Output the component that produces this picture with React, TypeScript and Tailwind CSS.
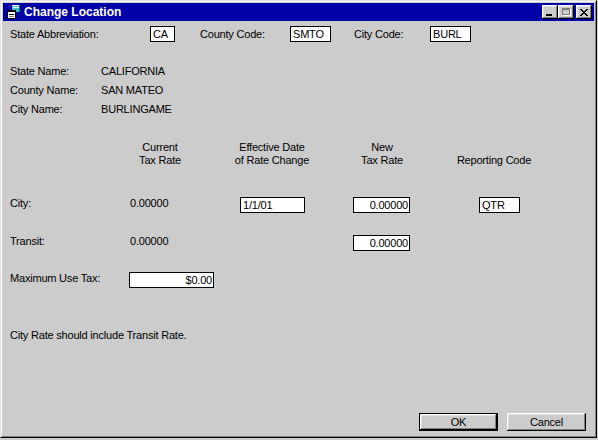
import React from 'react';

const bevel =
  'shadow-[inset_-1px_-1px_#000,inset_1px_1px_#fff,inset_-2px_-2px_#808080,inset_2px_2px_#e0e0e0]';

const Field: React.FC<{ value: string; width: string; right?: boolean }> = ({ value, width, right }) => (
  <div
    className={`${width} h-[16px] bg-white border border-black flex items-center leading-none ${
      right ? 'justify-end pr-[1px]' : 'pl-[2px]'
    }`}
  >
    {value}
  </div>
);

const TitleIcon = () => (
  <svg width="16" height="16" viewBox="0 0 16 16" shapeRendering="crispEdges">
    {/* back window */}
    <rect x="7" y="1" width="8" height="7" fill="#40c0c0" />
    <rect x="7" y="1" width="8" height="1" fill="#ffffff" />
    <rect x="8" y="3" width="6" height="1" fill="#ffffff" />
    <rect x="14" y="1" width="1" height="7" fill="#008080" />
    {/* front page */}
    <rect x="2" y="6" width="9" height="9" fill="#ffffff" />
    <rect x="2" y="6" width="9" height="2" fill="#000000" />
    <rect x="2" y="6" width="1" height="9" fill="#000000" />
    <rect x="10" y="6" width="1" height="9" fill="#000000" />
    <rect x="2" y="14" width="9" height="1" fill="#000000" />
    <rect x="4" y="10" width="5" height="1" fill="#000000" />
    <rect x="4" y="12" width="5" height="1" fill="#808080" />
  </svg>
);

const App: React.FC = () => {
  return (
    <div
      className="w-[598px] h-[440px] bg-[#cccccc] text-black text-[11px] tracking-[-0.2px]"
      style={{ fontFamily: '"Liberation Sans", Arial, sans-serif' }}
    >
      <div className="w-[597px] h-[438px] flex flex-col border border-t-[#e0e0e0] border-l-[#e0e0e0] border-r-black border-b-black">
        <div className="flex-1 flex flex-col p-[1px] border border-t-white border-l-white border-r-[#808080] border-b-[#808080]">
          {/* Title bar */}
          <div className="h-[18px] bg-[#0000a8] flex items-center pl-[2px] pr-[2px]">
            <TitleIcon />
            <span className="ml-[3px] text-white text-[12px] font-bold tracking-normal">Change Location</span>
            <div className="ml-auto flex items-center">
              <div className={`w-[16px] h-[14px] bg-[#cccccc] ${bevel} relative`}>
                <div className="absolute left-[4px] top-[9px] w-[6px] h-[2px] bg-black" />
              </div>
              <div className={`w-[16px] h-[14px] bg-[#cccccc] ${bevel} relative`}>
                <div className="absolute left-[4px] top-[3px] w-[8px] h-[7px] border border-[#808080] border-t-2 shadow-[1px_1px_#fff]" />
              </div>
              <div className={`ml-[2px] w-[16px] h-[14px] bg-[#cccccc] ${bevel} flex items-center justify-center`}>
                <svg width="8" height="7" viewBox="0 0 8 7" shapeRendering="crispEdges">
                  <path d="M0 0h2v1h1v1h2v-1h1v-1h2v1h-1v1h-1v1h-1v1h1v1h1v1h1v1h-2v-1h-1v-1h-2v1h-1v1h-2v-1h1v-1h1v-1h1v-1h-1v-1h-1v-1h-1z" fill="#000" />
                </svg>
              </div>
            </div>
          </div>

          {/* Content */}
          <div className="flex-1 flex flex-col pl-[7px] pr-[8px] pb-[4px]">
            <div className="mt-[5px] h-[16px] flex items-center">
              <div className="w-[140px]">State Abbreviation:</div>
              <Field value="CA" width="w-[25px]" />
              <div className="ml-[25px] w-[90px]">County Code:</div>
              <Field value="SMTO" width="w-[41px]" />
              <div className="ml-[23px] w-[76px]">City Code:</div>
              <Field value="BURL" width="w-[41px]" />
            </div>

            <div className="mt-[20px] flex flex-col">
              {[
                ['State Name:', 'CALIFORNIA'],
                ['County Name:', 'SAN MATEO'],
                ['City Name:', 'BURLINGAME'],
              ].map(([label, val]) => (
                <div key={label} className="h-[19px] flex items-center">
                  <div className="w-[91px]">{label}</div>
                  <div>{val}</div>
                </div>
              ))}
            </div>

            {/* Column headers */}
            <div className="mt-[22px] flex items-end leading-[13px] text-center">
              <div className="ml-[110px] w-[80px]">
                Current
                <br />
                Tax Rate
              </div>
              <div className="ml-[22px] w-[100px]">
                Effective Date
                <br />
                of Rate Change
              </div>
              <div className="ml-[30px] w-[60px]">
                New
                <br />
                Tax Rate
              </div>
              <div className="ml-[32px] w-[100px]">Reporting Code</div>
            </div>

            <div className="mt-[30px] h-[16px] flex items-center">
              <div className="w-[120px] pb-[4px]">City:</div>
              <div className="w-[110px] pb-[4px]">0.00000</div>
              <Field value="1/1/01" width="w-[65px]" />
              <div className="ml-[48px]">
                <Field value="0.00000" width="w-[57px]" right />
              </div>
              <div className="ml-[69px]">
                <Field value="QTR" width="w-[41px]" />
              </div>
            </div>

            <div className="mt-[22px] h-[16px] flex items-center">
              <div className="w-[120px] pb-[4px]">Transit:</div>
              <div className="w-[223px] pb-[4px]">0.00000</div>
              <Field value="0.00000" width="w-[57px]" right />
            </div>

            <div className="mt-[21px] h-[16px] flex items-center">
              <div className="w-[119px] pb-[4px]">Maximum Use Tax:</div>
              <Field value="$0.00" width="w-[85px]" right />
            </div>

            <div className="mt-[41px] leading-[13px]">City Rate should include Transit Rate.</div>

            {/* Buttons */}
            <div className="mt-auto flex justify-end gap-[9px]">
              <div className="w-[79px] h-[18px] border border-black">
                <div className={`w-full h-full ${bevel} flex items-center justify-center`}>OK</div>
              </div>
              <div className={`w-[79px] h-[18px] ${bevel} flex items-center justify-center`}>Cancel</div>
            </div>
          </div>
        </div>
      </div>
    </div>
  );
};

export default App;
